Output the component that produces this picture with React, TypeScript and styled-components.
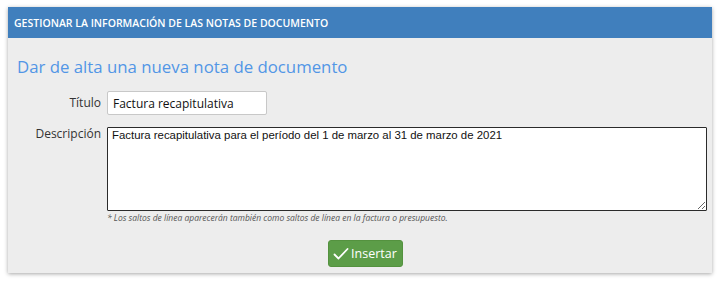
import React, { useState } from 'react';
import styled, { createGlobalStyle } from 'styled-components';

const GlobalStyle = createGlobalStyle`
  html, body {
    margin: 0;
    padding: 0;
    background: #ffffff;
    font-family: 'Open Sans', 'Liberation Sans', Arial, sans-serif;
  }
`;

const Page = styled.div`
  padding: 7px 8px 8px 8px;
`;

const Panel = styled.section`
  background: #ededed;
  box-shadow: 0 1px 4px rgba(0, 0, 0, 0.35);
  height: 266px;
  display: flex;
  flex-direction: column;
`;

const PanelHeader = styled.header`
  height: 31px;
  background: #407fbd;
  color: #ffffff;
  display: flex;
  align-items: center;
  padding: 0 6px;
  font-size: 10.5px;
  font-weight: 600;
  text-transform: uppercase;
`;

const PanelBody = styled.div`
  padding: 18px 5px 0 9px;
`;

const Heading = styled.h2`
  margin: 0 0 13px 0;
  font-size: 16.8px;
  font-weight: 400;
  color: #5296e6;
  line-height: 22px;
`;

const FormGrid = styled.div`
  display: grid;
  grid-template-columns: 84px 1fr;
  column-gap: 6px;
  row-gap: 12px;
  align-items: start;
`;

const Label = styled.label<{ $center?: boolean }>`
  text-align: right;
  font-size: 12px;
  color: #333333;
  line-height: ${({ $center }) => ($center ? '24px' : '14px')};
`;

const TextInput = styled.input`
  box-sizing: border-box;
  width: 160px;
  height: 24px;
  border: 1px solid #c8c8c8;
  border-radius: 2px;
  background: #ffffff;
  padding: 0 5px;
  font-family: 'Open Sans', sans-serif;
  font-size: 12px;
  color: #111111;
  outline: none;
`;

const Field = styled.div`
  display: flex;
  flex-direction: column;
`;

const TextArea = styled.textarea`
  box-sizing: border-box;
  width: 100%;
  height: 84px;
  border: 1px solid #2b2b2b;
  border-radius: 1px;
  background: #ffffff;
  padding: 0 4px;
  font-family: 'Liberation Sans', Arial, sans-serif;
  font-size: 11.4px;
  line-height: 14px;
  color: #111111;
  outline: none;
  resize: vertical;
  display: block;
`;

const Note = styled.p`
  margin: 1px 0 0 0;
  font-size: 8.5px;
  font-style: italic;
  color: #555555;
  line-height: 11px;
`;

const Actions = styled.div`
  display: flex;
  justify-content: center;
  margin-top: 17px;
  padding-left: 7px;
`;

const Button = styled.button`
  display: flex;
  align-items: center;
  gap: 2px;
  height: 27px;
  padding: 0 5px 0 4px;
  background: #5c9d48;
  border: 1px solid #54923f;
  border-radius: 3px;
  color: #ffffff;
  font-family: 'Open Sans', sans-serif;
  font-size: 12.5px;
  cursor: pointer;
`;

const CheckIcon = () => (
  <svg width="16" height="14" viewBox="0 0 16 14" fill="none">
    <path d="M1.5 7.5 L5.5 11.5 L14.5 2" stroke="#ffffff" strokeWidth="1.8" strokeLinecap="round" strokeLinejoin="round" />
  </svg>
);

export default function App() {
  const [title, setTitle] = useState('Factura recapitulativa');
  const [description, setDescription] = useState(
    'Factura recapitulativa para el período del 1 de marzo al 31 de marzo de 2021'
  );

  return (
    <>
      <GlobalStyle />
      <Page>
        <Panel>
          <PanelHeader>Gestionar la información de las notas de documento</PanelHeader>
          <PanelBody>
            <Heading>Dar de alta una nueva nota de documento</Heading>
            <FormGrid>
              <Label $center htmlFor="titulo">Título</Label>
              <TextInput id="titulo" value={title} onChange={e => setTitle(e.target.value)} />
              <Label htmlFor="descripcion">Descripción</Label>
              <Field>
                <TextArea
                  id="descripcion"
                  value={description}
                  onChange={e => setDescription(e.target.value)}
                />
                <Note>
                  * Los saltos de línea aparecerán también como saltos de línea en la factura o presupuesto.
                </Note>
              </Field>
            </FormGrid>
            <Actions>
              <Button type="button">
                <CheckIcon />
                Insertar
              </Button>
            </Actions>
          </PanelBody>
        </Panel>
      </Page>
    </>
  );
}
